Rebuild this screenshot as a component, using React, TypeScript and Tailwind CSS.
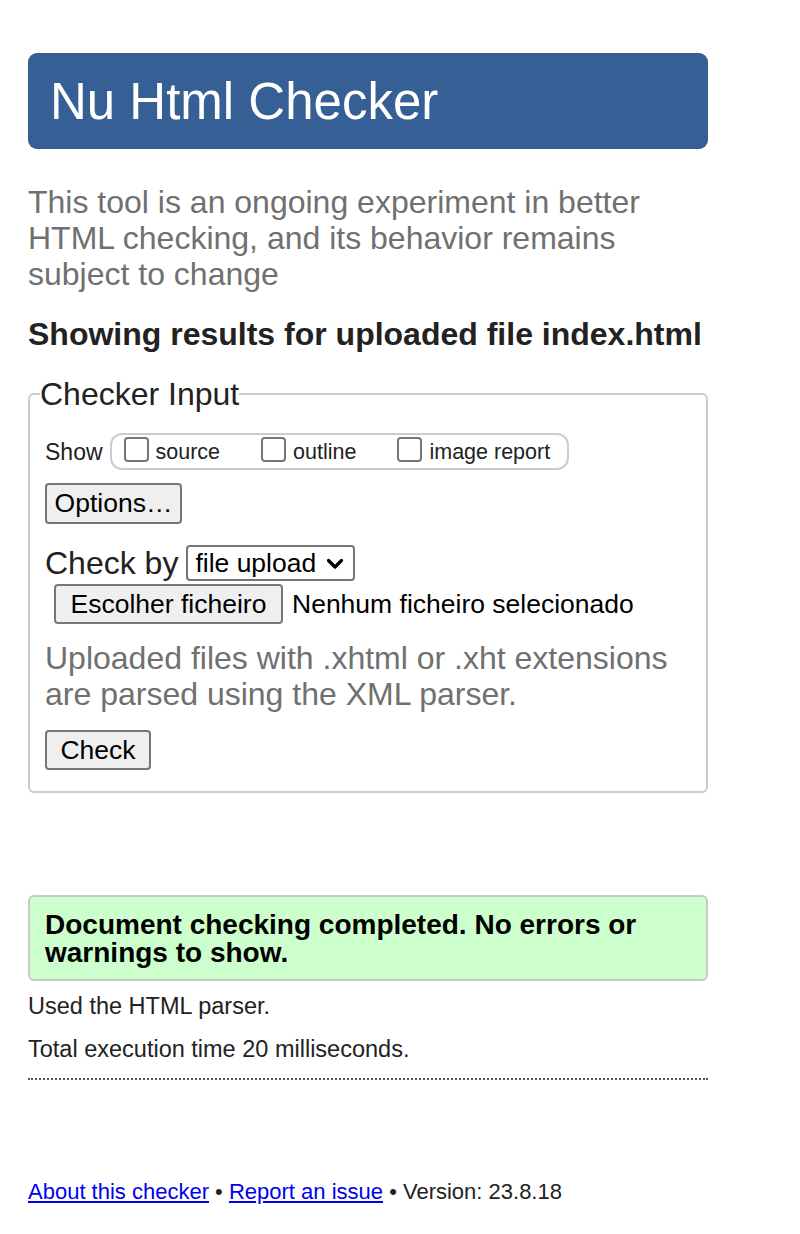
import React from 'react';

const font = "font-['Liberation_Sans',Arial,sans-serif]";

const Box: React.FC = () => (
  <span className="inline-block w-[25px] h-[25px] shrink-0 border-2 border-[#767676] rounded-[4px] bg-white self-end mb-[4px]" />
);

const CheckOption: React.FC<{ label: string; first?: boolean }> = ({ label, first }) => (
  <label className={`flex items-end ${first ? '' : 'ml-[41px]'}`}>
    <Box />
    <span className="ml-[7px] text-[21.5px] leading-[28px] text-[#222]">{label}</span>
  </label>
);

const Button: React.FC<{ children: React.ReactNode; className?: string }> = ({ children, className = '' }) => (
  <button
    className={`flex items-center justify-center bg-[#efefef] border-2 border-[#767676] rounded-[4px] text-[26.5px] leading-none text-black ${className}`}
  >
    {children}
  </button>
);

export default function App() {
  return (
    <div className={`${font} bg-white min-h-[1234px] text-[#222]`}>
      <div className="ml-[28px] w-[680px] pt-[53px] pb-[30px]">
        {/* header */}
        <header className="h-[96px] bg-[#365f95] rounded-[9px] flex items-center pl-[22px]">
          <h1 className="text-[51px] leading-none text-white">Nu Html Checker</h1>
        </header>

        <p className="mt-[35px] text-[32px] leading-[36px] text-[#707070]">
          This tool is an ongoing experiment in better HTML checking, and its behavior remains subject to change
        </p>

        <h2 className="mt-[24px] text-[32px] leading-[36px] font-bold text-[#222]">
          Showing results for uploaded file index.html
        </h2>

        <fieldset className="mt-[24px] border-2 border-[#cccccc] rounded-[6px] px-[15px] pt-[21px] pb-[21px]">
          <legend className="-ml-[5px] text-[32px] leading-[36px] text-[#222]">Checker Input</legend>

          {/* show row */}
          <div className="flex items-center">
            <span className="text-[23px] leading-[28px]">Show</span>
            <div className="ml-[7px] h-[37px] w-[459px] border-2 border-[#cccccc] rounded-[12px] px-[12px] flex items-end pb-[2px]">
              <CheckOption label="source" first />
              <CheckOption label="outline" />
              <CheckOption label="image report" />
            </div>
          </div>

          <Button className="mt-[13px] w-[137px] h-[41px]">Options…</Button>

          {/* check by */}
          <div className="mt-[21px] flex items-center">
            <span className="text-[32px] leading-[36px]">Check by</span>
            <div className="ml-[8px] w-[169px] h-[36px] border-2 border-[#767676] rounded-[4px] flex items-center pl-[7px] pr-[9px] justify-between">
              <span className="text-[26.5px] leading-none text-black">file upload</span>
              <svg width="18" height="12" viewBox="0 0 18 12" className="mt-[2px]">
                <path d="M2.5 2.5 L9 9 L15.5 2.5" fill="none" stroke="#000" strokeWidth="3.2" strokeLinecap="round" strokeLinejoin="round" />
              </svg>
            </div>
          </div>

          {/* file row */}
          <div className="mt-[3px] flex items-center">
            <Button className="ml-[9px] w-[229px] h-[40px]">Escolher ficheiro</Button>
            <span className="ml-[9px] text-[26.5px] leading-none text-black">Nenhum ficheiro selecionado</span>
          </div>

          <p className="mt-[16px] text-[32px] leading-[36px] text-[#707070]">
            Uploaded files with .xhtml or .xht extensions are parsed using the XML parser.
          </p>

          <Button className="mt-[18px] w-[106px] h-[40px]">Check</Button>
        </fieldset>

        {/* result */}
        <div className="mt-[102px] bg-[#ccffcc] border-2 border-[#c8c8c8] rounded-[6px] px-[15px] pt-[14px] pb-[12px]">
          <p className="text-[28px] leading-[28px] font-bold text-black">
            Document checking completed. No errors or warnings to show.
          </p>
        </div>

        <p className="mt-[12px] text-[23.5px] leading-[27px]">Used the HTML parser.</p>
        <p className="mt-[16px] text-[23.5px] leading-[27px]">Total execution time 20 milliseconds.</p>

        <hr className="mt-[15px] border-0 border-t-2 border-dotted border-[#555]" />

        <p className="mt-[98px] text-[22px] leading-[27px]">
          <a href="#" className="text-[#0000ee] underline">About this checker</a>
          {' • '}
          <a href="#" className="text-[#0000ee] underline">Report an issue</a>
          {' • Version: 23.8.18'}
        </p>
      </div>
    </div>
  );
}
